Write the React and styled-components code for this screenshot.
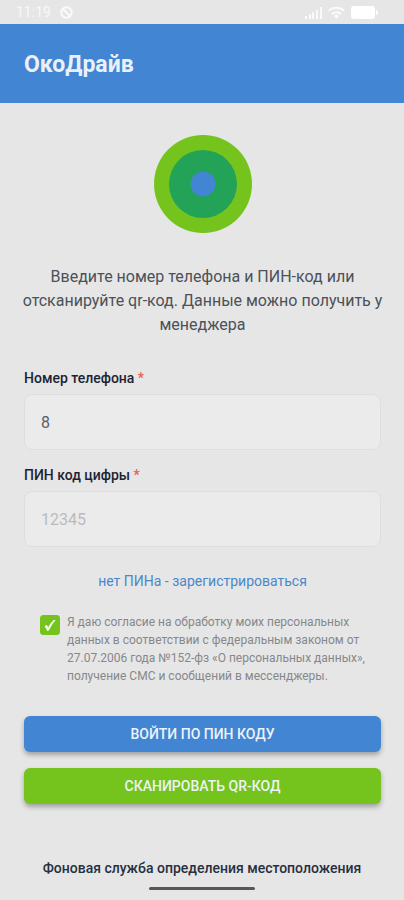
import React, { useState } from "react";
import styled, { createGlobalStyle } from "styled-components";

const GlobalStyle = createGlobalStyle`
  * {
    box-sizing: border-box;
  }
  body {
    margin: 0;
    background: #e6e6e6;
    font-family: Roboto, "Liberation Sans", sans-serif;
  }
`;

const Screen = styled.div`
  display: flex;
  flex-direction: column;
  min-height: 100vh;
`;
const StatusBar = styled.div`
  display: flex;
  justify-content: space-between;
  align-items: center;
  height: 24px;
  padding: 0 26px 0 16px;
  color: #f8f8f8;
  font-size: 14px;
  line-height: 24px;
`;
const StatusGroup = styled.div`
  display: flex;
  align-items: center;
  gap: ${({ $gap }) => $gap}px;
`;
const Header = styled.header`
  display: flex;
  align-items: center;
  height: 79px;
  padding: 2px 24px 0;
  background: #4285d3;
  h1 {
    margin: 0;
    color: #e9f0fa;
    font-size: 23px;
    font-weight: 700;
    line-height: 28px;
  }
`;
const Content = styled.main`
  display: flex;
  flex: 1;
  flex-direction: column;
  padding: 31px 23px 0 24px;
`;
const Logo = styled.svg`
  align-self: center;
  width: 100px;
  height: 100px;
`;
const Intro = styled.p`
  margin: 31px -8px;
  color: #4b5158;
  font-size: 16px;
  line-height: 24px;
  text-align: center;
`;
const Form = styled.form`
  display: flex;
  flex-direction: column;
`;
const Field = styled.div`
  display: flex;
  flex-direction: column;
  gap: 6px;
  margin-bottom: 15px;
  label {
    color: #1c2434;
    font-size: 14px;
    font-weight: 500;
    line-height: 20px;
  }
  span {
    color: #e5604f;
  }
`;
const TextInput = styled.input`
  width: 100%;
  height: 56px;
  padding: 0 16px;
  border: 1px solid #dcdedf;
  border-radius: 8px;
  outline: none;
  background: #ebebeb;
  color: #5a5f64;
  font-family: inherit;
  font-size: 16px;
  &::placeholder {
    color: #b9bbbd;
    opacity: 1;
  }
`;
const RegisterLink = styled.a`
  align-self: center;
  margin-top: 9px;
  color: #4a88cc;
  font-size: 14px;
  line-height: 20px;
  text-decoration: none;
`;
const Consent = styled.label`
  display: flex;
  gap: 7px;
  margin: 22px 0 31px;
  padding: 0 8px 0 16px;
  color: #85888b;
  font-size: 12px;
  line-height: 18px;
`;
const CheckBox = styled.span`
  display: grid;
  flex: none;
  width: 20px;
  height: 20px;
  margin-top: 2px;
  input,
  svg {
    grid-area: 1 / 1;
    width: 20px;
    height: 20px;
    margin: 0;
  }
  input {
    appearance: none;
    border: 1px solid #74c41d;
    border-radius: 3px;
    cursor: pointer;
  }
  input:checked {
    background: #74c41d;
  }
  svg {
    pointer-events: none;
  }
`;
const Button = styled.button`
  height: 36px;
  margin-bottom: 16px;
  border: none;
  border-radius: 6px;
  background: ${({ $color }) => $color};
  box-shadow: 0 3px 5px rgb(0 0 0 / 30%);
  color: #edf3f8;
  cursor: pointer;
  font-family: inherit;
  font-size: 14px;
  font-weight: 500;
  text-transform: uppercase;
`;
const Footer = styled.footer`
  display: flex;
  flex-direction: column;
  align-items: center;
  gap: 9px;
  padding-bottom: 10px;
  color: #263040;
  font-size: 14px;
  font-weight: 500;
  line-height: 20px;
`;
const HomeBar = styled.div`
  width: 106px;
  height: 3px;
  border-radius: 2px;
  background: #555856;
`;

function StatusIcons() {
  return (
    <StatusGroup $gap={6}>
      <svg width="18" height="13" viewBox="0 0 18 13" fill="#fafafa">
        <rect x="1" y="10" width="2" height="3" />
        <rect x="5" y="8" width="2" height="5" />
        <rect x="8" y="6" width="2" height="7" />
        <rect x="12" y="4" width="2" height="9" />
        <rect x="16" y="1" width="2" height="12" />
      </svg>
      <svg width="17" height="13" viewBox="0 0 17 13" fill="none" stroke="#fafafa" strokeWidth="2">
        <path d="M0.800 4.800a11 11 0 0 1 15.400 0" />
        <path d="M3.800 8.200a6.700 6.700 0 0 1 9.400 0" />
        <path d="M5.900 10a3.700 3.700 0 0 1 5.200 0L8.500 12.800z" fill="#fafafa" stroke="none" />
      </svg>
      <svg width="27" height="13" viewBox="0 0 27 13" fill="#fff">
        <rect width="24" height="13" rx="3" />
        <path d="M25 4q2 .5 2 2.500t-2 2.500z" />
      </svg>
    </StatusGroup>
  );
}

function App() {
  const [phone, setPhone] = useState("8");
  const [pin, setPin] = useState("");
  const [agreed, setAgreed] = useState(true);

  return (
    <Screen>
      <GlobalStyle />
      <StatusBar>
        <StatusGroup $gap={9}>
          <span>11:19</span>
          <svg width="13" height="13" viewBox="0 0 13 13" fill="none" stroke="#fafafa" strokeWidth="2">
            <circle cx="6.500" cy="6.500" r="5.200" />
            <path d="M2.800 2.800l7.400 7.400" />
          </svg>
        </StatusGroup>
        <StatusIcons />
      </StatusBar>
      <Header>
        <h1>ОкоДрайв</h1>
      </Header>
      <Content>
        <Logo viewBox="0 0 100 100">
          <circle cx="50" cy="50" r="49" fill="#74c41d" />
          <circle cx="50" cy="50" r="34" fill="#22a357" />
          <circle cx="50" cy="50" r="12.500" fill="#4285d3" />
        </Logo>
        <Intro>
          Введите номер телефона и ПИН-код или отсканируйте qr-код. Данные можно
          получить у менеджера
        </Intro>
        <Form onSubmit={(e) => e.preventDefault()}>
          <Field>
            <label htmlFor="phone">
              Номер телефона <span>*</span>
            </label>
            <TextInput
              id="phone"
              type="tel"
              value={phone}
              onChange={(e) => setPhone(e.target.value)}
            />
          </Field>
          <Field>
            <label htmlFor="pin">
              ПИН код цифры <span>*</span>
            </label>
            <TextInput
              id="pin"
              inputMode="numeric"
              placeholder="12345"
              value={pin}
              onChange={(e) => setPin(e.target.value)}
            />
          </Field>
          <RegisterLink href="#register">
            нет ПИНа - зарегистрироваться
          </RegisterLink>
          <Consent>
            <CheckBox>
              <input
                type="checkbox"
                checked={agreed}
                onChange={(e) => setAgreed(e.target.checked)}
              />
              {agreed && (
                <svg viewBox="0 0 20 20" fill="#f4faee">
                  <path d="M4.600 11.500q1-1.700 2-1.500.9.300 1.500 2.300Q10.800 7.400 13.700 5l2 .1Q12 9 9 15.200q-.6.900-1.900.7Q6.100 13 4.600 11.500z" />
                </svg>
              )}
            </CheckBox>
            <span>
              Я даю согласие на обработку моих персональных данных в
              соответствии с федеральным законом от 27.07.2006 года №152-фз «О
              персональных данных», получение СМС и сообщений в мессенджеры.
            </span>
          </Consent>
          <Button type="submit" $color="#4285d3">
            Войти по пин коду
          </Button>
          <Button type="button" $color="#74c41d">
            Сканировать QR-код
          </Button>
        </Form>
      </Content>
      <Footer>
        <span>Фоновая служба определения местоположения</span>
        <HomeBar />
      </Footer>
    </Screen>
  );
}

export default App;
